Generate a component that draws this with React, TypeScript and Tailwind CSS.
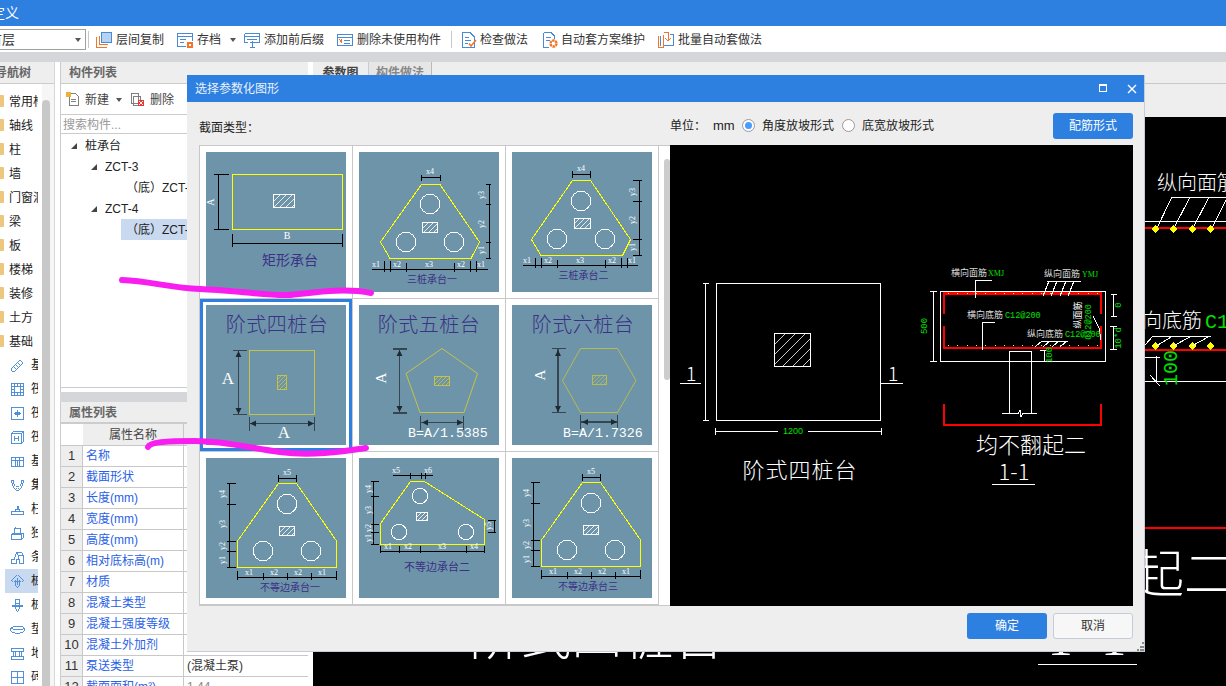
import React from 'react';

const cjk = "'Noto Sans CJK SC','Liberation Sans',sans-serif";
const serif = "'Liberation Serif','Noto Sans CJK SC',serif";
const mono = "'Liberation Mono',monospace";
const green = '#00e000';

// 截面缩略图里的小工具
const Hatch = ({ x, y, w, h, color = '#fff', step = 6, sw = 1 }: { x: number; y: number; w: number; h: number; color?: string; step?: number; sw?: number }) => {
    const segs: string[] = [];
    for (let c = step; c < w + h; c += step) {
        const p1 = c <= h ? [0, c] : [c - h, h];
        const p2 = c <= w ? [c, 0] : [w, c - w];
        segs.push(`M${x + p1[0]} ${y + p1[1]}L${x + p2[0]} ${y + p2[1]}`);
    }
    return (
        <g>
            <rect x={x} y={y} width={w} height={h} fill="none" stroke={color} strokeWidth={sw} />
            <path d={segs.join('')} stroke={color} strokeWidth={sw * 0.8} fill="none" />
        </g>
    );
};

const Lb = ({ x, y, t, r }: { x: number; y: number; t: string; r?: boolean }) => (
    <text x={x} y={y} fontSize={8} fontFamily={serif} fill="#fff" textAnchor="middle" dominantBaseline="middle" transform={r ? `rotate(-90 ${x} ${y})` : undefined}>
        {t}
    </text>
);

const Title = ({ x, y, size, t }: { x: number; y: number; size: number; t: string }) => (
    <text x={x} y={y} fontSize={size} fontFamily={cjk} fontWeight={size > 15 ? 300 : 400} fill="#3b3185" textAnchor="middle" dominantBaseline="middle" letterSpacing={size > 15 ? 0.5 : 0}>
        {t}
    </text>
);

const Dim = ({ d, color = '#000', sw = 1 }: { d: string; color?: string; sw?: number }) => <path d={d} fill="none" stroke={color} strokeWidth={sw} />;
const Poly = ({ p, color = '#ffff00', sw = 1 }: { p: string; color?: string; sw?: number }) => <polygon points={p} fill="none" stroke={color} strokeWidth={sw} />;
const Pile = ({ x, y, r = 9.7 }: { x: number; y: number; r?: number }) => <circle cx={x} cy={y} r={r} fill="none" stroke="#fff" strokeWidth={1} />;

const Thumb = ({ children }: { children: React.ReactNode }) => (
    <svg width={140} height={140} viewBox="0 0 140 140" className="block bg-[#6e94a9]" shapeRendering="crispEdges">
        {children}
    </svg>
);

const Thumb1 = () => (
    <Thumb>
        <rect x={26.5} y={22.5} width={110} height={55} fill="none" stroke="#ffff00" strokeWidth={1} />
        <Hatch x={67.5} y={42.5} w={21} h={13} />
        <Dim d="M8 22.5H23M8 77.5H23M12.5 22V78M26.5 82V95M136.5 82V95M26 91.5H137" />
        <text x={6} y={50} fontSize={10} fontFamily={serif} fill="#fff" textAnchor="middle" dominantBaseline="middle" transform="rotate(-90 6 50)">A</text>
        <text x={81} y={85} fontSize={10} fontFamily={serif} fill="#fff" textAnchor="middle" dominantBaseline="middle">B</text>
        <Title x={84} y={109} size={14} t="矩形承台" />
    </Thumb>
);

const Thumb2 = () => (
    <Thumb>
        <Poly p="62.5,32.5 81,32.5 120.5,90 112,106.5 31,106.5 21.5,90" />
        <Pile x={71} y={52} /><Pile x={47} y={90} /><Pile x={95} y={90} />
        <Hatch x={63.5} y={70.5} w={15} h={10} step={5} />
        <Dim d="M62.5 23V29M81 23V29M62.5 25.5H81M127 32.5H132M127 52.5H132M127 90.5H132M127 106.5H132M130.5 32.5V106M13 117.5H129M25.5 109V120M31.5 109V120M47.5 111V120M95.5 111V120M111.5 109V120M117.5 109V120" />
        <Lb x={71} y={20} t="x4" />
        <Lb x={123} y={43} t="y3" r /><Lb x={123} y={72} t="y2" r /><Lb x={123} y={98} t="y1" r />
        <Lb x={17} y={113} t="x1" /><Lb x={38} y={113} t="x2" /><Lb x={70} y={113} t="x3" /><Lb x={102} y={113} t="x2" /><Lb x={122} y={113} t="x1" />
        <Title x={73} y={128} size={10} t="三桩承台一" />
    </Thumb>
);

const Thumb3 = () => (
    <Thumb>
        <Poly p="60.5,28.5 78.5,28.5 118.5,87.5 110.5,103.5 29,103.5 19.5,87.5" />
        <Pile x={69} y={49} /><Pile x={45} y={87} /><Pile x={93} y={87} />
        <Hatch x={62.5} y={66} w={16} h={10} step={5} />
        <Dim d="M60.5 19V26M78.5 19V26M60.5 22.5H78.5M121 28.5H130M121 49.5H130M121 87.5H130M121 103.5H130M127.5 28.5V103M11 113.5H126M23.5 106V116M29.5 106V116M45.5 108V116M93.5 108V116M109.5 106V116M115.5 106V116" />
        <Lb x={69} y={17} t="x4" />
        <Lb x={121} y={40} t="y3" r /><Lb x={121} y={68} t="y2" r /><Lb x={121} y={95} t="y1" r />
        <Lb x={15} y={109} t="x1" /><Lb x={36} y={109} t="x2" /><Lb x={68} y={109} t="x3" /><Lb x={100} y={109} t="x2" /><Lb x={120} y={109} t="x1" />
        <Title x={71.5} y={124.5} size={10} t="三桩承台二" />
    </Thumb>
);

const Arrows = ({ v, h }: { v: [number, number, number]; h: [number, number, number] }) => (
    <g fill="#1f2a30" shapeRendering="auto">
        <path d={`M${v[0]} ${v[1]}l-3 6h6zM${v[0]} ${v[2]}l-3 -6h6z`} />
        <path d={`M${h[0]} ${h[2]}l6 -3v6zM${h[1]} ${h[2]}l-6 -3v6z`} />
    </g>
);

const Thumb4 = () => (
    <Thumb>
        <Title x={71} y={22} size={20} t="阶式四桩台" />
        <rect x={43.5} y={45.5} width={65} height={64} fill="none" stroke="#c4c345" strokeWidth={1} />
        <Hatch x={71.5} y={70} w={9} h={14} color="#c4c345" step={4} />
        <Dim d="M27 45.5H41M27 109.5H41M43.5 112V126M108.5 112V126" color="#36454f" />
        <Dim d="M32.5 46V109M44 118.5H108" color="#36454f" sw={1.5} />
        <Arrows v={[32.5, 46, 109]} h={[44, 108, 118.5]} />
        <text x={22} y={75} fontSize={17} fontFamily={serif} fill="#fff" textAnchor="middle" dominantBaseline="middle">A</text>
        <text x={78} y={129} fontSize={17} fontFamily={serif} fill="#fff" textAnchor="middle" dominantBaseline="middle">A</text>
    </Thumb>
);

const Thumb5 = () => (
    <Thumb>
        <Title x={70} y={22} size={20} t="阶式五桩台" />
        <polygon points="83,43.5 118.5,68.5 105,107.5 61,107.5 47,68.5" fill="none" stroke="#c4c345" strokeWidth={1} shapeRendering="auto" />
        <Hatch x={75.5} y={71} w={15} h={9} color="#c4c345" step={4} />
        <Dim d="M33.5 44H47.5M33.5 108H47.5M61.5 111V125M104.5 111V125" color="#36454f" sw={1.5} />
        <Dim d="M40.5 44V108M62 117.5H104" color="#36454f" />
        <Arrows v={[40.5, 45, 107]} h={[63, 104, 117.5]} />
        <text x={24} y={73} fontSize={15} fontFamily={serif} fill="#fff" textAnchor="middle" dominantBaseline="middle" transform="rotate(-90 24 73)">A</text>
        <text x={49} y={132} fontSize={13.3} fontFamily={mono} fill="#fff">B=A/1.5385</text>
    </Thumb>
);

const Thumb6 = () => (
    <Thumb>
        <Title x={71} y={22} size={20} t="阶式六桩台" />
        <polygon points="68.5,43.5 105.5,43.5 124,75.5 105.5,107.5 68.5,107.5 50.5,75.5" fill="none" stroke="#b8ba52" strokeWidth={1} shapeRendering="auto" />
        <Hatch x={80.5} y={70} w={14} h={9} color="#b8ba52" step={4} />
        <Dim d="M39.5 43.5H54M39.5 107.5H54M68.5 110V124M105.5 110V124" color="#36454f" />
        <Dim d="M46 44V107M69 117H105" color="#36454f" sw={1.5} />
        <Arrows v={[46, 45, 107]} h={[70, 105, 117]} />
        <text x={30} y={70} fontSize={15} fontFamily={serif} fill="#fff" textAnchor="middle" dominantBaseline="middle" transform="rotate(-90 30 70)">A</text>
        <text x={51} y={132} fontSize={13.3} fontFamily={mono} fill="#fff">B=A/1.7326</text>
    </Thumb>
);

// 不等边承台一、三只差一点偏移
const Uneven = ({ dx, dy, title, tx, ty }: { dx: number; dy: number; title: string; tx: number; ty: number }) => (
    <Thumb>
        <g transform={`translate(${dx} ${dy})`}>
            <Poly p="72.5,25.5 90.5,25.5 130.5,83 130.5,109.5 31.5,109.5 31.5,83" />
            <Pile x={81} y={46} /><Pile x={57} y={93} /><Pile x={105} y={93} />
            <Hatch x={73.5} y={68.5} w={15} h={9} step={5} />
            <Dim d="M72.5 17V24M90.5 17V24M72.5 20.5H90.5M21 25.5H30M21 46.5H30M21 83.5H30M21 93.5H30M21 109.5H30M23.5 25.5V109M31.5 113V122M57.5 115V122M81.5 115V122M105.5 115V122M130.5 113V122M31 119.5H131" />
            <Lb x={81} y={15} t="x5" />
            <Lb x={17} y={36} t="y4" r /><Lb x={17} y={66} t="y3" r /><Lb x={17} y={88} t="y2" r /><Lb x={17} y={102} t="y1" r />
            <Lb x={43} y={115} t="x1" /><Lb x={68} y={115} t="x2" /><Lb x={92} y={115} t="x2" /><Lb x={116} y={115} t="x1" />
        </g>
        <Title x={tx} y={ty} size={10} t={title} />
    </Thumb>
);

const Thumb8 = () => (
    <Thumb>
        <Poly p="51.5,23.5 65.5,23.5 125.5,61.5 125.5,86.5 21.5,86.5 21.5,65.5" />
        <Pile x={61} y={38} r={7.7} /><Pile x={40} y={74} r={7.7} /><Pile x={107} y={74} r={7.7} />
        <Hatch x={57.5} y={54.5} w={11} h={8} step={4} />
        <Dim d="M34 17.5H74M51.5 15V21M62.5 15V21M66 15V21M12 23.5H20M12 38.5H20M12 66.5H20M12 74.5H20M12 86.5H20M14.5 23.5V86M129 62.5H137M129 74.5H137M135.5 62.5V74M21.5 88V95M40.5 88V95M61.5 88V95M107.5 88V95M125.5 88V95M21 93.5H126" />
        <Lb x={37} y={13} t="x5" /><Lb x={69} y={13} t="x6" />
        <Lb x={10} y={31} t="y4" r /><Lb x={10} y={52} t="y3" r /><Lb x={10} y={70} t="y2" r /><Lb x={10} y={80} t="y1" r /><Lb x={130} y={68} t="y5" r />
        <Lb x={29} y={89} t="x1" /><Lb x={49} y={89} t="x2" /><Lb x={83} y={89} t="x3" /><Lb x={115} y={89} t="x4" />
        <Title x={78} y={110} size={11} t="不等边承台二" />
    </Thumb>
);

const thumbs = [
    <Thumb1 />, <Thumb2 />, <Thumb3 />,
    <Thumb4 />, <Thumb5 />, <Thumb6 />,
    <Uneven dx={0} dy={0} title="不等边承台一" tx={84} ty={130} />, <Thumb8 />, <Uneven dx={-2} dy={-1} title="不等边承台三" tx={76} ty={129} />,
];

const Preview = () => {
    const topDots = Array.from({ length: 17 }, (_, i) => 948 + i * 9.3);
    return (
        <svg width={463} height={461} viewBox="670 145 463 461" className="block bg-black shrink-0" shapeRendering="crispEdges">
            <rect x={716.5} y={283.5} width={164} height={137} fill="none" stroke="#fff" />
            <Hatch x={774.5} y={333.5} w={36} h={33} step={10} />
            <Dim d="M705.5 283V420M703 283.5H709M703 420.5H709M715 431.5H778M808 431.5H881M715 428V435M881 428V435M680 383.5H701M881 383.5H903" color="#fff" />
            <text x={793} y={432} fontSize={9} fontFamily="'Liberation Sans',sans-serif" fill={green} textAnchor="middle" dominantBaseline="middle">1200</text>
            <text x={691} y={381} fontSize={20} fontFamily={cjk} fontWeight={300} fill="#fff" textAnchor="middle">1</text>
            <text x={893} y={381} fontSize={20} fontFamily={cjk} fontWeight={300} fill="#fff" textAnchor="middle">1</text>
            <text x={800} y={472} fontSize={22} fontFamily={cjk} fontWeight={300} fill="#fff" textAnchor="middle" dominantBaseline="middle" letterSpacing={1}>阶式四桩台</text>

            <rect x={940.5} y={291.5} width={165} height={70} fill="none" stroke="#fff" />
            <Dim d="M944 314V293.5H1101V314M944 326V348H1101V326M944 404V425H1101V404" color="#ff0000" sw={2.5} />
            {topDots.map(x => (
                <g key={x}>
                    <rect x={x} y={293} width={1} height={1} fill="#ffff00" />
                    <rect x={x} y={345} width={1} height={1} fill="#ffff00" />
                </g>
            ))}
            <Dim d="M933.5 291V361M930 291.5H937M930 361.5H937M975.5 280.5H992M975.5 280V298M1047 281.5H1081M1049 281L1043 296M1057 281L1051 296M1066 281L1060 296M1074 281L1068 296M982.5 322.5H995M982.5 322V350M1042 341.5H1068M1042 341L1035 347M1050 341L1043 347M1059 341L1052 347M1067 341L1060 347M1113.5 294V317M1111 294.5H1117M1111 316.5H1117M1113.5 327V349M1110 326.5H1117M1110 349.5H1117M1009.5 351H1031.5M1009.5 351V413M1031.5 351V413M1002 413.5H1018L1020 410L1021 417L1023 413.5H1037M1044 350V362M1040 350.5H1046M1093 316L1099 328L1101 340" color="#fff" />
            <text x={969} y={274} fontSize={9} fontFamily={cjk} fill="#ddd" textAnchor="middle" dominantBaseline="middle">横向面筋</text>
            <text x={988} y={274} fontSize={8} fontFamily={serif} fill={green} dominantBaseline="middle" textAnchor="start">XMJ</text>
            <text x={1062} y={275} fontSize={9} fontFamily={cjk} fill="#ddd" textAnchor="middle" dominantBaseline="middle">纵向面筋</text>
            <text x={1082} y={275} fontSize={8} fontFamily={serif} fill={green} dominantBaseline="middle">YMJ</text>
            <text x={985} y={316} fontSize={9} fontFamily={cjk} fill="#ddd" textAnchor="middle" dominantBaseline="middle">横向底筋</text>
            <text x={1005} y={316} fontSize={8.5} fontFamily={mono} fill={green} dominantBaseline="middle">C12@200</text>
            <text x={1045} y={335} fontSize={9} fontFamily={cjk} fill="#ddd" textAnchor="middle" dominantBaseline="middle">纵向底筋</text>
            <text x={1065} y={335} fontSize={8.5} fontFamily={mono} fill={green} dominantBaseline="middle">C12@200</text>
            <g>
                <text x={1079} y={315} fontSize={9} fontFamily={cjk} fill="#fff" textAnchor="middle" dominantBaseline="middle" transform="rotate(-90 1079 315)">纵面筋</text>
                <text x={1089} y={322} fontSize={8.5} fontFamily={mono} fill={green} textAnchor="middle" dominantBaseline="middle" transform="rotate(-90 1089 322)">C12@200</text>
                <text x={925} y={326} fontSize={9} fontFamily={mono} fill={green} textAnchor="middle" dominantBaseline="middle" transform="rotate(-90 925 326)">500</text>
                <text x={1119} y={305} fontSize={9} fontFamily={mono} fill={green} textAnchor="middle" dominantBaseline="middle" transform="rotate(-90 1119 305)">0</text>
                <text x={1119} y={338} fontSize={9} fontFamily={mono} fill={green} textAnchor="middle" dominantBaseline="middle" transform="rotate(-90 1119 338)">10*d</text>
                <text x={1050} y={355} fontSize={9} fontFamily={mono} fill={green} textAnchor="middle" dominantBaseline="middle" transform="rotate(-90 1050 355)">100</text>
            </g>
            <text x={1031} y={447} fontSize={22} fontFamily={cjk} fontWeight={300} fill="#fff" textAnchor="middle" dominantBaseline="middle">均不翻起二</text>
            <text x={1014} y={480} fontSize={22} fontFamily={cjk} fontWeight={300} fill="#fff" textAnchor="middle">1-1</text>
            <Dim d="M992 484.5H1035" color="#fff" />
        </svg>
    );
};

// 对话框后面的 CAD 图
const CadBackground = () => (
    <svg width={913} height={569} viewBox="313 117 913 569" className="block" shapeRendering="crispEdges">
        <text x={1157} y={190} fontSize={20} fontFamily={cjk} fontWeight={300} fill="#fff">纵向面筋</text>
        <Dim d="M1171 197.5H1226M1172 197L1156 230M1190 197L1173 230M1209 197L1192 230M1226 200L1211 230M1145 221.5H1226" color="#fff" />
        <Dim d="M1145 228H1226M1145 350H1226" color="#ff0000" sw={2.5} />
        {[1155.7, 1173.3, 1192.3, 1210.7].map(x => (
            <g key={x}>
                <path d={`M${x} 225l4 4 -4 4 -4 -4z`} fill="#ffff00" />
                <path d={`M${x} 342l4 4 -4 4 -4 -4z`} fill="#ffff00" />
            </g>
        ))}
        <text x={1142} y={328} fontSize={20} fontFamily={cjk} fontWeight={300} fill="#fff">向底筋</text>
        <text x={1205} y={328} fontSize={20} fontFamily={mono} fill={green}>C1</text>
        <Dim d="M1145 345L1153 336H1211M1173 336L1156 346M1192 336L1173 346M1210 336L1192 346M1145 381.5H1226M1156.5 356V381M1145 357H1160M1150 375L1160 386" color="#fff" />
        <text x={1172} y={368} fontSize={20} fontFamily={mono} fill={green} textAnchor="middle" dominantBaseline="middle" transform="rotate(-90 1172 368)">100</text>
        <Dim d="M1145 528H1226" color="#ff0000" sw={2.5} />
        <text x={1236} y={593} fontSize={52} fontFamily={cjk} fontWeight={300} fill="#fff" textAnchor="end">均不翻起二</text>
        <text x={597} y={655} fontSize={51} fontFamily={cjk} fontWeight={300} fill="#fff" textAnchor="middle">阶式四桩台</text>
        <text x={1090} y={655} fontSize={50} fontFamily={serif} fill="#fff" textAnchor="middle" letterSpacing={6}>1-1</text>
        <Dim d="M1038 664.5H1137" color="#fff" />
    </svg>
);

const Ico = ({ children, s = 16 }: { children: React.ReactNode; s?: number }) => (
    <svg width={s} height={s} viewBox="0 0 16 16" fill="none" className="shrink-0" stroke="#4a8ad4" strokeWidth={1} shapeRendering="crispEdges">
        {children}
    </svg>
);

const orange = '#f0772a';

const toolbarLeft = [
    {
        label: '层间复制',
        gap: 'gap-[4px]',
        icon: (
            <Ico>
                <rect x="5.5" y="0.5" width="10" height="10" fill="#b5d3f5" />
                <path d="M3.5 4V12.5H12M0.5 5V15.5H11" stroke={orange} />
            </Ico>
        ),
    },
    {
        label: '存档',
        gap: 'gap-[4px]',
        caret: true,
        icon: (
            <Ico>
                <path d="M0.5 1.5H15.5V4.5H0.5ZM0.5 4.5V14.5H9M15.5 4.5V9M3 7.5H9M3 10.5H7" />
                <rect x="10" y="10" width="6" height="6" fill={orange} stroke="none" />
                <rect x="12" y="12" width="2" height="2" fill="#fff" stroke="none" />
            </Ico>
        ),
    },
    {
        label: '添加前后缀',
        gap: 'gap-[4px]',
        icon: (
            <Ico>
                <path d="M0.5 1.5H15.5V10.5H10M0.5 1.5V10.5H4M0.5 4.5H15.5M3 7.5H13M8 9V15.5M5.5 10.5H10.5M5.5 15.5H10.5" />
            </Ico>
        ),
    },
    {
        label: '删除未使用构件',
        gap: 'gap-[4px]',
        icon: (
            <Ico>
                <rect x="0.5" y="2.5" width="15" height="11" />
                <path d="M0.5 5.5H15.5M7 8.5H13M7 11H13" />
                <path d="M2.5 7.5L5 10.5M5 7.5L2.5 10.5" stroke={orange} />
            </Ico>
        ),
    },
];

const toolbarRight = [
    {
        label: '检查做法',
        cls: 'gap-[3px] mr-[14px]',
        icon: (
            <Ico>
                <path d="M1.5 0.5H9L13.5 5V15.5H1.5ZM4 5H8M4 8H10M4 11H7" />
                <path d="M8 11.5L10 14L15 8" stroke={orange} strokeWidth={1.5} shapeRendering="auto" />
            </Ico>
        ),
    },
    {
        label: '自动套方案维护',
        cls: 'gap-[3px] mr-[13px]',
        icon: (
            <Ico>
                <path d="M1.5 0.5H9L12.5 4V7M1.5 0.5V15.5H7M4 5H9M4 8H8" />
                <circle cx="11.5" cy="11.5" r="3" stroke={orange} strokeWidth={2.4} strokeDasharray="2.5 0.6" shapeRendering="auto" />
            </Ico>
        ),
    },
    {
        label: '批量自动套做法',
        cls: 'gap-[4px] mr-[13px]',
        icon: (
            <Ico>
                <path d="M0.5 3.5V15.5H5V2.5" stroke={orange} />
                <path d="M5.5 0.5H10V9M10 9L7.5 6.5M10 9L12.5 6.5" stroke={orange} />
                <path d="M2.5 3.5V13.5M12 2.5H15.5V13.5H6" />
            </Ico>
        ),
    },
];

const Caret = () => <span className="w-0 h-0 border-l-[3.5px] border-r-[3.5px] border-t-[4px] border-l-transparent border-r-transparent border-t-[#555]" />;

const navFolders = ['常用构件', '轴线', '柱', '墙', '门窗洞', '梁', '板', '楼梯', '装修', '土方', '基础'];

const navSubs: { t: string; sel?: boolean; icon: React.ReactNode }[] = [
    { t: '基础梁', icon: <path d="M2 11L11 2L14 5L5 14H2ZM4 9L7 12M6 7L9 10M8 5L11 8" /> },
    { t: '筏板基础', icon: <path d="M1.5 1.5H14.5V14.5H1.5ZM4.5 4.5H11.5V11.5H4.5ZM1.5 4.5H4.5M11.5 4.5H14.5M1.5 11.5H4.5M11.5 11.5H14.5M4.5 1.5V4.5M11.5 1.5V4.5M4.5 11.5V14.5M11.5 11.5V14.5M8 1.5V4.5M8 11.5V14.5M1.5 8H4.5M11.5 8H14.5" /> },
    { t: '筏板主筋', icon: <path d="M1.5 1.5H14.5V14.5H1.5ZM8 4V12M4 8H12M5.5 6.5H10.5V9.5H5.5Z" /> },
    { t: '筏板负筋', icon: <path d="M1.5 3.5H12.5V14.5H1.5ZM1.5 3.5L4 1.5H14.5V12.5L12.5 14.5M14.5 1.5L12.5 3.5M5 6.5V11.5M9 6.5V11.5M4 9H10" /> },
    { t: '基础板带', icon: <path d="M1.5 3.5H14.5V13.5H1.5ZM1.5 6.5H14.5M6 3.5V13.5M10 3.5V13.5M8 7V13" /> },
    { t: '集水坑', icon: <path d="M1 3L4 3V6L6 9H10L12 6V3H15M1 3L4 10L6 13H10L12 10L15 3M6 11H7M9 11H10M8 12H8.5" /> },
    { t: '柱墩', icon: <path d="M1.5 10.5H14.5V13.5H1.5ZM5.5 10.5V7.5H10.5V10.5M7.5 7.5V4.5H9.5V7.5" /> },
    { t: '独立基础', icon: <path d="M1.5 9.5H12.5V14.5H1.5ZM1.5 9.5L3.5 7.5H14.5V12.5L12.5 14.5M4.5 7.5V2.5H11.5V7.5M6.5 2.5L5 1" /> },
    { t: '条形基础', icon: <path d="M1.5 14.5V10.5H4.5L7 2.5H12L14.5 6V14.5H10.5V10.5H6.5V14.5ZM7 2.5L9 6H14.5M9 6V10" /> },
    { t: '桩承台', sel: true, icon: <path d="M8 1L2 7L4 9L6 7V12L8 15L10 12V7L12 9L14 7ZM8 4V12M5 6L8 9L11 6" /> },
    { t: '桩', icon: <path d="M6 1.5H10V5.5H6ZM2.5 7.5H13.5V9.5H2.5ZM5 9.5H11L8 14.5ZM6 5.5V7.5M10 5.5V7.5" /> },
    { t: '垫层', icon: <path d="M1 6.5C1 4 15 4 15 6.5V10C15 12.5 1 12.5 1 10ZM1 6.5C1 9 15 9 15 6.5" /> },
    { t: '地沟', icon: <path d="M1.5 2.5H14.5V5.5H1.5ZM3.5 5.5V11.5M5.5 5.5V11.5M10.5 5.5V11.5M12.5 5.5V11.5M1.5 11.5H14.5V14.5H1.5Z" /> },
    { t: '砖胎膜', icon: <path d="M1.5 1.5H14.5V14.5H1.5ZM8 1.5V14.5M1.5 8H14.5" /> },
];

const propRows: [string, string?][] = [
    ['名称'], ['截面形状'], ['长度(mm)'], ['宽度(mm)'], ['高度(mm)'], ['相对底标高(m)'], ['材质'], ['混凝土类型'],
    ['混凝土强度等级'], ['混凝土外加剂'], ['泵送类型', '(混凝土泵)'], ['截面面积(m²)', '1.44'],
];

const Radio = ({ on }: { on?: boolean }) => (
    <span className="w-[13px] h-[13px] mb-[2px] rounded-full border border-[#999] bg-white flex items-center justify-center shrink-0">
        {on && <span className="w-[7px] h-[7px] rounded-full bg-[#4a9cff]" />}
    </span>
);

const Dialog = () => (
    <div className="absolute left-[187px] top-[75px] w-[958px] h-[577px] flex flex-col bg-[#eeeeee] border-r border-b border-[#c5cbd9]">
        <div className="h-[27px] shrink-0 bg-[#2d7fe0] flex items-center pl-[8px] pr-[7px] text-white/90 text-[12px]">
            <span>选择参数化图形</span>
            <svg width={9} height={9} viewBox="0 0 9 9" className="ml-auto" shapeRendering="crispEdges">
                <rect x={0.5} y={0.5} width={7} height={7} fill="none" stroke="#fff" />
                <rect x={0} y={0} width={8} height={2} fill="#fff" />
            </svg>
            <svg width={10} height={10} viewBox="0 0 10 10" className="ml-[19px]">
                <path d="M1 1L9 9M9 1L1 9" stroke="#fff" strokeWidth={1.4} />
            </svg>
        </div>
        <div className="h-[43px] shrink-0 pl-[12px] pr-[11px] flex items-end pb-[6px] text-[12px] text-[#222]">
            <div className="w-[471px] h-[26px] flex items-center pt-[3px]">截面类型：</div>
            <div className="flex-1 flex items-center h-[26px]">
                <span className="w-[43px]">单位：</span>
                <span className="w-[29px] font-['Liberation_Sans',sans-serif] text-[13px]">mm</span>
                <Radio on />
                <span className="ml-[7px] w-[80px]">角度放坡形式</span>
                <Radio />
                <span className="ml-[7px]">底宽放坡形式</span>
                <button className="ml-auto w-[80px] h-[26px] rounded-[3px] bg-[#2d7fe0] text-white text-[12px]">配筋形式</button>
            </div>
        </div>
        <div className="flex ml-[12px] h-[461px] shrink-0">
            <div className="relative w-[471px] h-full bg-white border-y border-l border-[#c8c8c8] overflow-hidden">
                <div className="grid grid-cols-[153px_153px_153px] w-[459px]">
                    {thumbs.map((t, i) => (
                        <div key={i} className="w-[153px] h-[153px] border-r border-b border-[#c8c8c8]">
                            {i === 3 ? (
                                <div className="w-[152px] h-[152px] border-[3px] border-[#2d7fe0] p-[3px]">{t}</div>
                            ) : (
                                <div className="p-[6px]">{t}</div>
                            )}
                        </div>
                    ))}
                </div>
                <div className="absolute right-0 top-[13px] w-[6px] h-[221px] rounded-[3px] bg-[#cccccc]" />
            </div>
            <Preview />
        </div>
        <div className="flex justify-end gap-[6px] pt-[7px] pr-[11px] text-[12px]">
            <button className="w-[80px] h-[26px] rounded-[3px] bg-[#2d7fe0] text-white">确定</button>
            <button className="w-[80px] h-[26px] rounded-[3px] bg-[#f7f7f7] border border-[#c5cbd9] text-[#333]">取消</button>
        </div>
        <svg width={7} height={9} viewBox="0 0 7 9" className="absolute right-0 bottom-0" shapeRendering="crispEdges">
            <path d="M5 0h2v2H5zM2.5 3.5h2v2h-2zM5 3.5h2v2H5zM0 7h2v2H0zM2.5 7h2v2h-2zM5 7h2v2H5z" fill="#8a8a8a" />
        </svg>
    </div>
);

export default function App() {
    return (
        <div className="relative w-[1226px] h-[686px] overflow-hidden bg-white flex flex-col text-[12px] text-[#333] font-['Liberation_Sans','Noto_Sans_CJK_SC',sans-serif]">
            <div className="h-[26px] shrink-0 bg-[#2d7fe0] flex items-center text-white text-[14px]">
                <span className="-ml-[9px]">定义</span>
            </div>

            <div className="h-[26px] shrink-0 bg-white flex items-center">
                <div className="-ml-px w-[87px] h-[21px] border border-[#a0a0a0] flex items-center justify-between pr-[4px] overflow-hidden mt-[1px]">
                    <span className="-ml-[11px] text-[13px]">首层</span>
                    <Caret />
                </div>
                <span className="ml-[2px] w-px h-[17px] bg-[#c8c8c8]" />
                <div className="flex items-center ml-[7px]">
                    {toolbarLeft.map(b => (
                        <div key={b.label} className={`flex items-center h-[22px] pt-[1px] ${b.caret ? 'mr-[8px]' : 'mr-[13px]'} ${b.gap}`}>
                            {b.icon}
                            <span>{b.label}</span>
                            {b.caret && <span className="ml-[5px] flex"><Caret /></span>}
                        </div>
                    ))}
                </div>
                <span className="-ml-[3px] w-px h-[17px] bg-[#c8c8c8]" />
                <div className="flex items-center ml-[9px]">
                    {toolbarRight.map(b => (
                        <div key={b.label} className={`flex items-center h-[22px] pt-[1px] ${b.cls}`}>
                            {b.icon}
                            <span>{b.label}</span>
                        </div>
                    ))}
                </div>
            </div>

            <div className="h-[10px] shrink-0 bg-[#d5d6da]" />

            <div className="flex flex-1 min-h-0">
                <div className="w-[55px] shrink-0 flex flex-col bg-[#f6f6f6] border-r border-[#d8d8d8]">
                    <div className="h-[22px] shrink-0 bg-[#eeeeee] flex items-center overflow-hidden font-bold text-[#666] border-b border-[#ccc] whitespace-nowrap pt-[1px]">
                        <span className="-ml-[5px]">导航树</span>
                    </div>
                    <div className="flex flex-1 min-h-0">
                        <div className="w-[42px] bg-white shrink-0">
                            <div className="w-[38px] h-full overflow-hidden pt-[5px]">
                                {navFolders.map(f => (
                                    <div key={f} className="h-[24px] flex items-center whitespace-nowrap text-[#222]">
                                        <span className="-ml-[4px] w-[8px] h-[12px] rounded-[1px] bg-[#eec77f] shrink-0" />
                                        <span className="ml-[5px] pt-[1px]">{f}</span>
                                    </div>
                                ))}
                                {navSubs.map(s => (
                                    <div key={s.t} className={`h-[24px] flex items-center whitespace-nowrap text-[#222] ml-[5px] pl-[5px] ${s.sel ? 'bg-[#c9d9f0]' : ''}`}>
                                        <Ico s={15}>{s.icon}</Ico>
                                        <span className="ml-[6px]">{s.t}</span>
                                    </div>
                                ))}
                            </div>
                        </div>
                        <div className="w-[8px] mt-[16px] rounded-t-[4px] bg-[#c8c8c8] shrink-0" />
                    </div>
                </div>

                <div className="w-[5px] shrink-0 bg-white" />

                <div className="w-[248px] shrink-0 flex flex-col bg-white border-l border-[#c8ccd4]">
                    <div className="h-[22px] shrink-0 bg-[#eeeeee] flex items-center pl-[8px] pt-[1px] font-bold text-[#666] border-b border-[#ccc]">构件列表</div>
                    <div className="h-[30px] shrink-0 flex items-center pl-[5px] pt-[1px] text-[#444]">
                        <Ico s={15}>
                            <path d="M3.5 1.5H10L13.5 5V14.5H3.5ZM5.5 7.5H11M5.5 10H11" stroke="#777" />
                            <rect x="0" y="0" width="5" height="5" fill="#f0b030" stroke="none" />
                        </Ico>
                        <span className="ml-[4px]">新建</span>
                        <span className="ml-[7px] flex"><Caret /></span>
                        <span className="ml-[8px] flex">
                            <Ico s={15}>
                                <path d="M1.5 1.5H9V12.5H1.5ZM4 4.5H11.5V14.5H4Z" stroke="#777" />
                                <rect x="8" y="8" width="7" height="7" fill="#e23b3b" stroke="none" />
                                <path d="M9.5 9.5L13.5 13.5M13.5 9.5L9.5 13.5" stroke="#fff" />
                            </Ico>
                        </span>
                        <span className="ml-[5px]">删除</span>
                    </div>
                    <div className="h-[20px] shrink-0 flex items-center pl-[2px] pt-[1px] border-y border-[#ccc] text-[#999]">搜索构件...</div>
                    <div className="h-[254px] shrink-0 pt-[1px] border-b border-[#ccc] text-[#222] text-[12px]">
                        {[
                            { t: '桩承台', pl: 'pl-[24px]', arrow: true },
                            { t: 'ZCT-3', pl: 'pl-[44px]', arrow: true },
                            { t: '（底）ZCT-3-1', pl: 'pl-[65px]' },
                            { t: 'ZCT-4', pl: 'pl-[44px]', arrow: true },
                            { t: '（底）ZCT-4-1', pl: 'pl-[65px]', sel: true },
                        ].map(r => (
                            <div key={r.t} className={`relative h-[21px] flex items-center whitespace-nowrap ${r.pl}`}>
                                {r.sel && <span className="absolute left-[60px] top-0 bottom-0 w-[140px] bg-[#c9d9f0]" />}
                                {r.arrow && <span className="-ml-[14px] mr-[8px] w-0 h-0 border-l-[6px] border-l-transparent [border-bottom:6px_solid_#444]" />}
                                <span className="relative">{r.t}</span>
                            </div>
                        ))}
                    </div>
                    <div className="h-[4px] shrink-0" />
                    <div className="h-[10px] shrink-0 -ml-px bg-[#d5d6da]" />
                    <div className="h-[22px] shrink-0 bg-[#eeeeee] flex items-center pl-[8px] pt-[1px] font-bold text-[#666] border-b-2 border-[#ccc]">属性列表</div>
                    <div className="flex h-[21px] shrink-0">
                        <div className="w-[22px]" />
                        <div className="w-[100px] bg-[#eeeeee] flex items-center justify-center text-[#444]">属性名称</div>
                        <div className="flex-1 bg-[#eeeeee] border-l border-[#c8c8c8]" />
                    </div>
                    {propRows.map(([name, val], i) => (
                        <div key={name} className="flex h-[21px] shrink-0 border-t border-[#c8c8c8]">
                            <div className="w-[22px] bg-[#eeeeee] flex items-center justify-center text-[#333] text-[13px] border-r border-[#c8c8c8]">{i + 1}</div>
                            <div className="w-[100px] flex items-center pl-[3px] text-[#2a5fe6] whitespace-nowrap">{name}</div>
                            <div className={`flex-1 flex items-center pl-[3px] border-l border-[#c8c8c8] ${i === 11 ? 'text-[#888]' : 'text-[#333]'}`}>{val}</div>
                        </div>
                    ))}
                </div>

                <div className="w-[5px] shrink-0 bg-white" />

                <div className="flex-1 min-w-0 flex flex-col bg-[#eeeeee]">
                    <div className="h-[22px] shrink-0 flex items-end border-b border-[#c8c8c8] bg-[#eeeeee]">
                        <div className="w-[56px] h-[21px] flex items-center justify-center font-bold text-[#444] bg-[#eeeeee] border-r border-[#ccc]">参数图</div>
                        <div className="w-[63px] h-[21px] flex items-center justify-center font-bold text-[#888] bg-[#e6e6e6] border-r border-[#bbb]">构件做法</div>
                    </div>
                    <div className="h-[33px] shrink-0" />
                    <div className="flex-1 min-h-0 bg-black overflow-hidden">
                        <CadBackground />
                    </div>
                </div>
            </div>

            <Dialog />

            {/* 截图上手画的两道记号 */}
            <svg width={1226} height={686} viewBox="0 0 1226 686" fill="none" className="absolute inset-0 pointer-events-none">
                <path d="M122 280C150 281 170 288 200 289S270 296 288 295S340 287 371 293" stroke="#f81ef0" strokeWidth={6} strokeLinecap="round" />
                <path d="M148 447C150 442 165 441 195 441S250 448 280 452S340 452 366 448" stroke="#f81ef0" strokeWidth={6} strokeLinecap="round" />
            </svg>
        </div>
    );
}
